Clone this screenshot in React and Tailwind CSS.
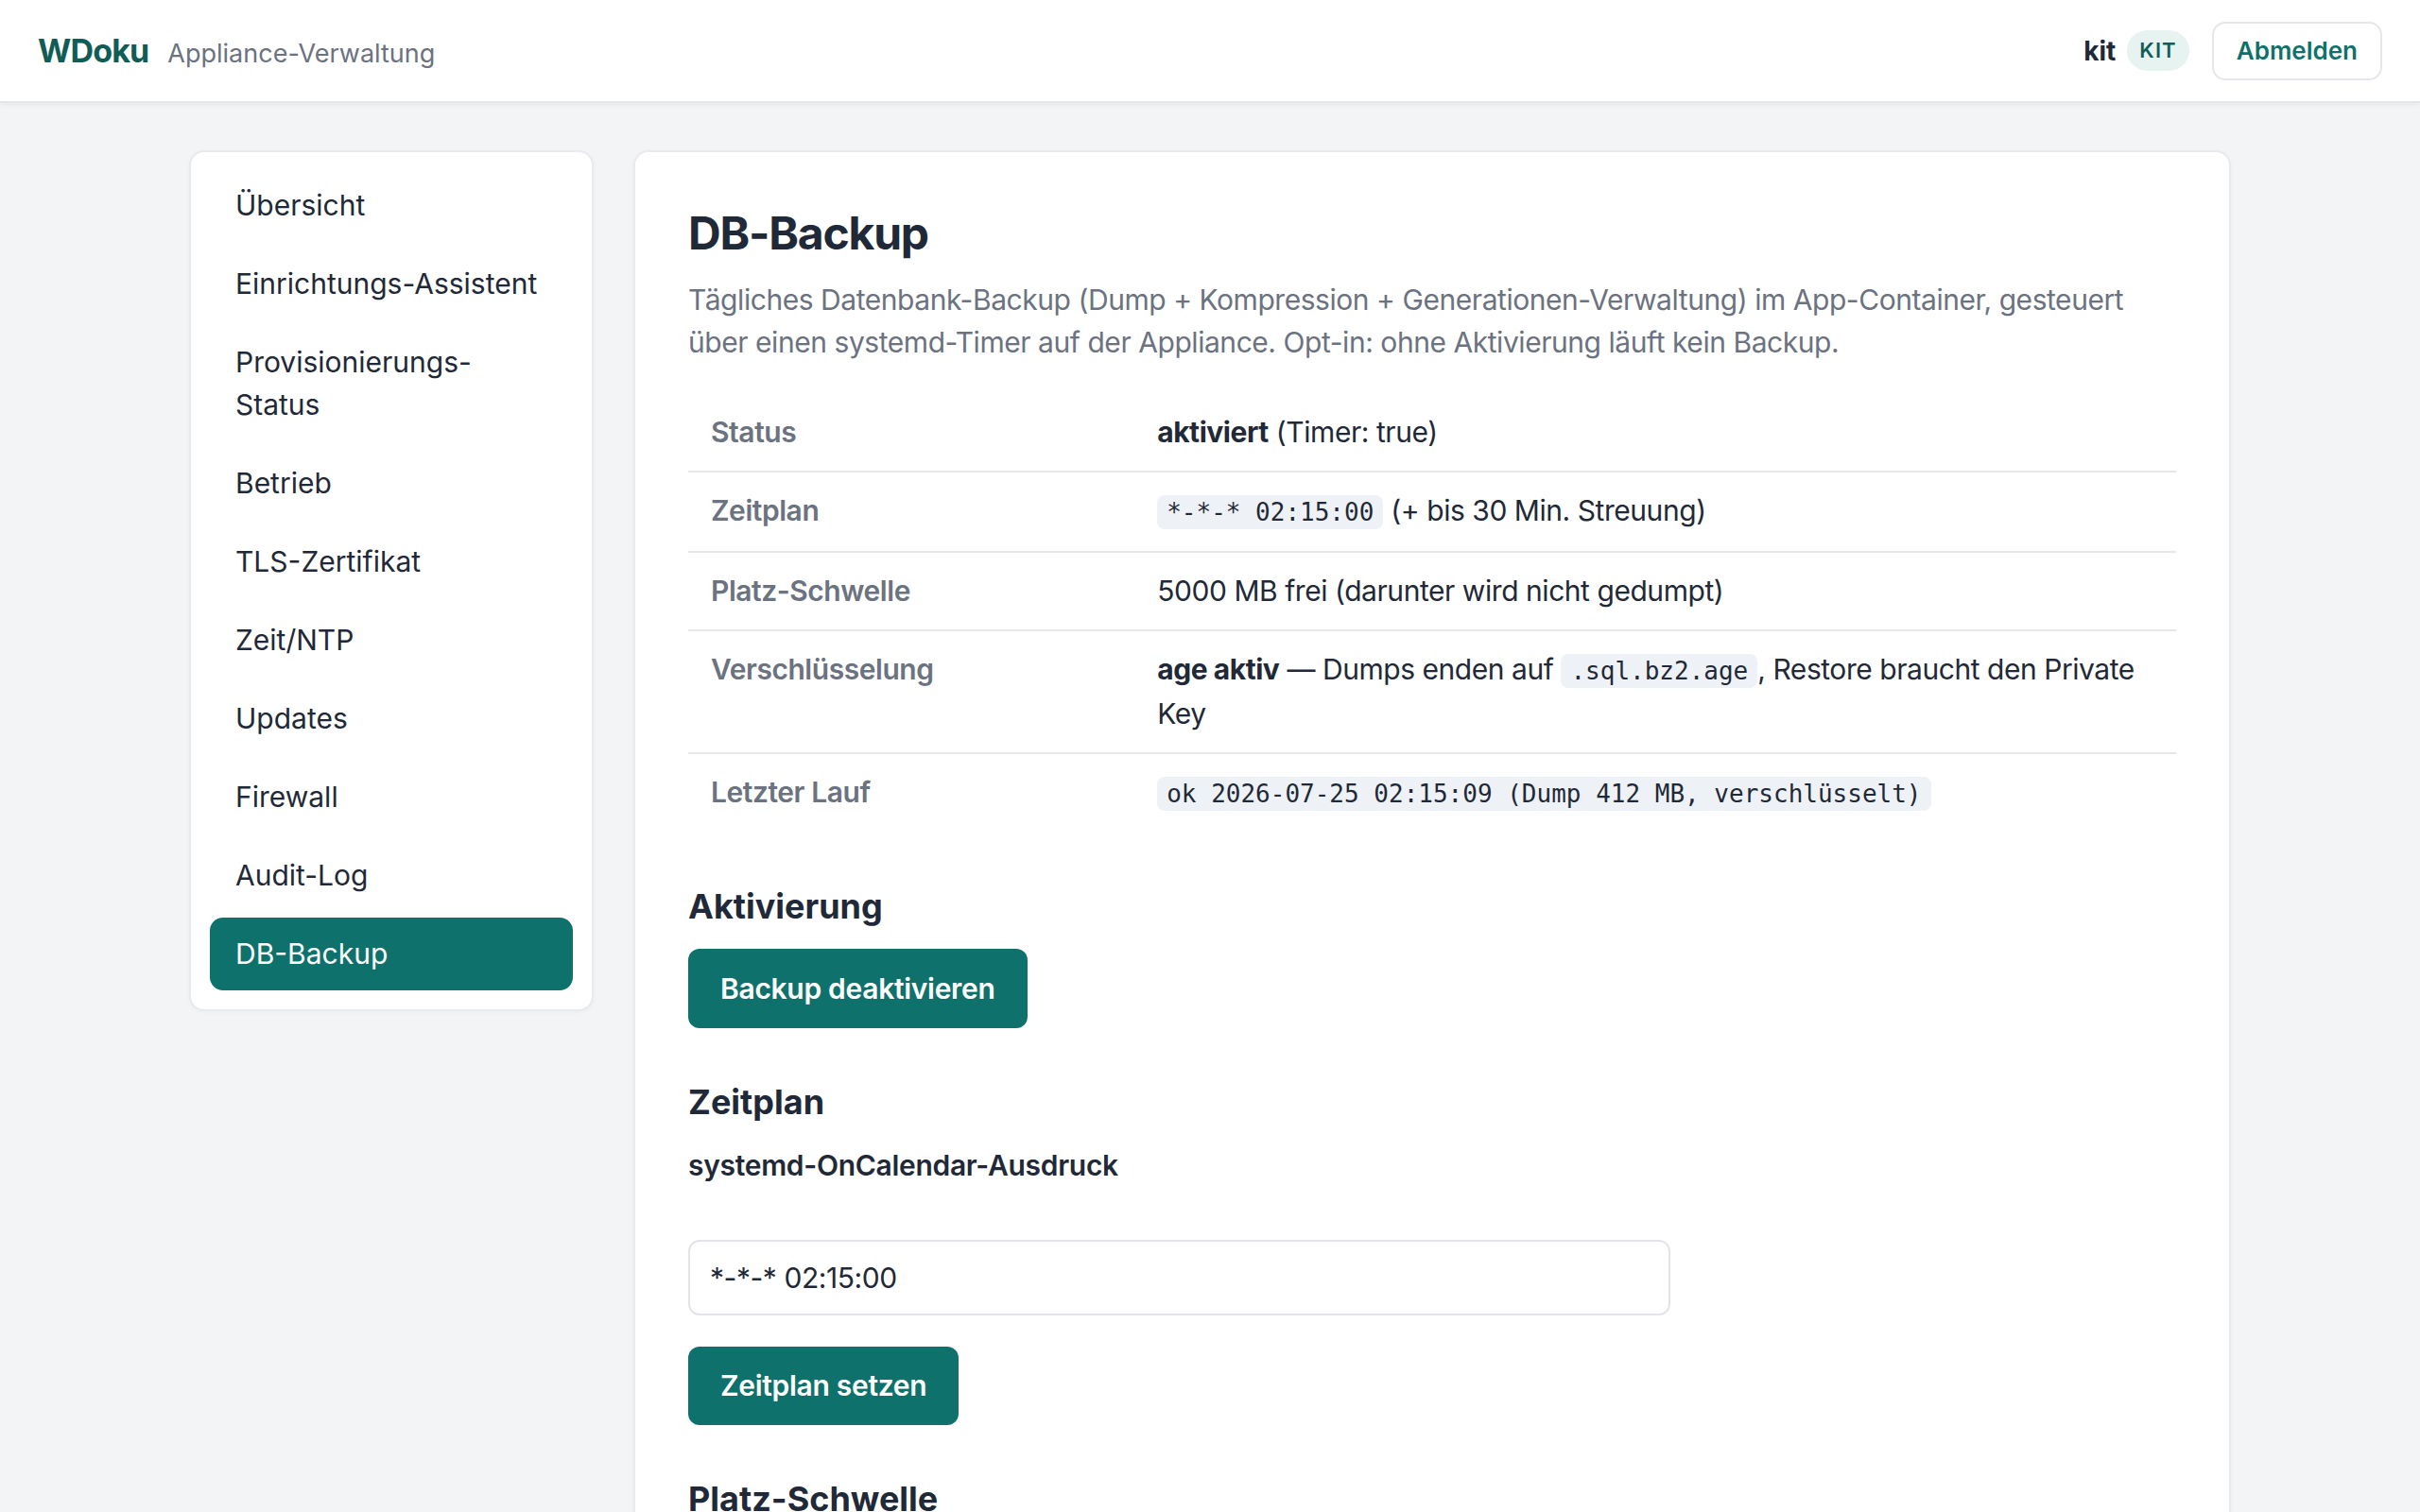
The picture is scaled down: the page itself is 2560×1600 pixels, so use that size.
import React, { useState } from "react";

const navItems = [
  "Übersicht",
  "Einrichtungs-Assistent",
  "Provisionierungs-Status",
  "Betrieb",
  "TLS-Zertifikat",
  "Zeit/NTP",
  "Updates",
  "Firewall",
  "Audit-Log",
  "DB-Backup",
];

function Code({ children }) {
  return (
    <code className="font-['DejaVu_Sans_Mono',monospace] tracking-normal text-[26px] bg-[#eef2f6] rounded-[8px] px-[10px] py-[3px] text-[#1f2937]">
      {children}
    </code>
  );
}

function Row({ label, children, last }) {
  return (
    <tr className={last ? "" : "border-b-2 border-[#e5e7eb]"}>
      <th className="w-[30%] text-left align-top px-[24px] py-[18px] font-semibold text-[#6b7280]">
        {label}
      </th>
      <td className="align-top pl-[24px] pr-[16px] py-[18px] text-[#1f2937]">{children}</td>
    </tr>
  );
}

export default function App() {
  const [active] = useState("DB-Backup");
  const [schedule, setSchedule] = useState("*-*-* 02:15:00");

  return (
    <div className="min-h-screen bg-[#f3f4f6] font-['Inter','Noto_Sans',sans-serif] text-[#1f2937]">
      <header className="h-[109px] bg-white border-b-2 border-[#e3e5e9] shadow-[0_2px_6px_rgba(0,0,0,0.05)] flex items-center justify-between px-[40px]">
        <div className="flex items-baseline gap-[20px]">
          <span className="text-[34px] font-bold tracking-tight text-[#0f5d56]">WDoku</span>
          <span className="text-[27px] text-[#6b7280]">Appliance-Verwaltung</span>
        </div>
        <div className="flex items-center">
          <span className="text-[28px] font-bold text-[#1f2937]">kit</span>
          <span className="ml-[12px] h-[43px] px-[13px] rounded-full bg-[#e6f3f1] text-[#115e59] text-[22px] font-semibold tracking-wider flex items-center">
            KIT
          </span>
          <button className="ml-[24px] h-[62px] px-[24px] border-2 border-[#e5e7eb] rounded-[14px] bg-white text-[26px] font-semibold text-[#0f716b]">
            Abmelden
          </button>
        </div>
      </header>

      <div className="w-[2160px] mx-auto pt-[50px] flex items-start gap-[42px]">
        <aside className="w-[428px] shrink-0 bg-white border-2 border-[#e8eaee] rounded-[16px] shadow-[0_1px_4px_rgba(0,0,0,0.04)] px-[20px] pt-[18px] pb-[20px] flex flex-col gap-[6px]">
          {navItems.map((item) => (
            <a
              key={item}
              href="#"
              className={
                item === active
                  ? "block pl-[27px] pr-[32px] py-[16px] rounded-[14px] text-[30px] leading-[45px] bg-[#0f716b] text-white"
                  : "block pl-[27px] pr-[32px] py-[16px] rounded-[14px] text-[30px] leading-[45px] text-[#1f2937]"
              }
            >
              {item}
            </a>
          ))}
        </aside>

        <main className="flex-1 bg-white border-2 border-[#e8eaee] rounded-[16px] shadow-[0_1px_4px_rgba(0,0,0,0.04)] p-[56px] pb-[120px]">
          <h1 className="text-[48px] leading-[60px] font-bold tracking-tight text-[#1f2937]">DB-Backup</h1>
          <p className="mt-[18px] text-[30px] leading-[45px] tracking-[-0.015em] text-[#6b7280]">
            Tägliches Datenbank-Backup (Dump + Kompression + Generationen-Verwaltung) im App-Container, gesteuert
            über einen systemd-Timer auf der Appliance. Opt-in: ohne Aktivierung läuft kein Backup.
          </p>

          <table className="mt-[32px] w-full border-collapse text-[30px] leading-[45px] tracking-[-0.015em]">
            <tbody>
              <Row label="Status">
                <strong className="font-bold">aktiviert</strong> (Timer: true)
              </Row>
              <Row label="Zeitplan">
                <Code>*-*-* 02:15:00</Code> (+ bis 30 Min. Streuung)
              </Row>
              <Row label="Platz-Schwelle">5000 MB frei (darunter wird nicht gedumpt)</Row>
              <Row label="Verschlüsselung">
                <strong className="font-bold">age aktiv</strong> — Dumps enden auf <Code>.sql.bz2.age</Code>, Restore
                braucht den Private Key
              </Row>
              <Row label="Letzter Lauf" last>
                <Code>ok 2026-07-25 02:15:09 (Dump 412 MB, verschlüsselt)</Code>
              </Row>
            </tbody>
          </table>

          <h2 className="mt-[56px] mb-[22px] text-[36px] leading-[45px] font-bold text-[#1f2937]">Aktivierung</h2>
          <button className="h-[84px] px-[34px] rounded-[12px] bg-[#0f716b] text-white text-[30px] font-semibold tracking-[-0.01em]">
            Backup deaktivieren
          </button>

          <h2 className="mt-[56px] mb-[22px] text-[36px] leading-[45px] font-bold text-[#1f2937]">Zeitplan</h2>
          <label className="block text-[30px] leading-[45px] font-semibold tracking-[-0.01em] text-[#1f2937]">
            systemd-OnCalendar-Ausdruck
          </label>
          <input
            value={schedule}
            onChange={(e) => setSchedule(e.target.value)}
            className="block mt-[56px] w-[1039px] h-[80px] border-2 border-[#e2e4e8] rounded-[12px] px-[21px] text-[30px] tracking-[-0.015em] text-[#1f2937] outline-none"
          />
          <button className="mt-[33px] h-[83px] px-[34px] rounded-[12px] bg-[#0f716b] text-white text-[30px] font-semibold tracking-[-0.01em]">
            Zeitplan setzen
          </button>

          <h2 className="mt-[56px] mb-[22px] text-[36px] leading-[45px] font-bold text-[#1f2937]">Platz-Schwelle</h2>
        </main>
      </div>
    </div>
  );
}
